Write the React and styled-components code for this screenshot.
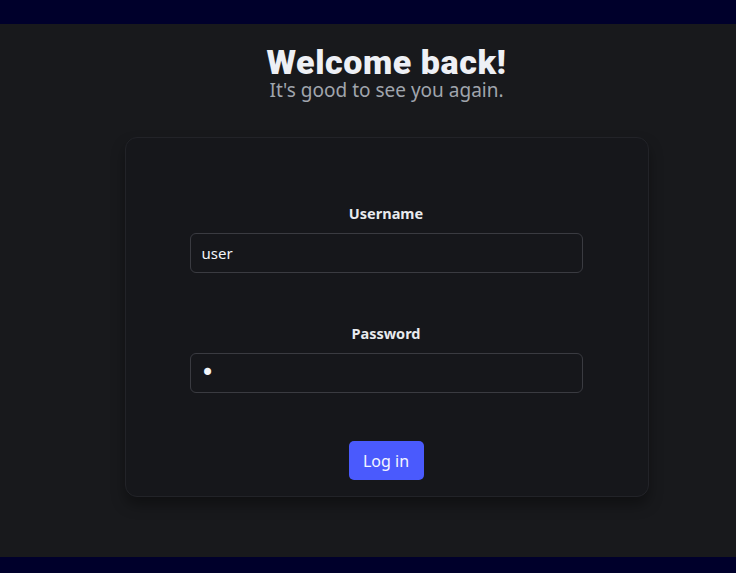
import React from "react"
import styled, { createGlobalStyle } from "styled-components"

const Global = createGlobalStyle`
html, body {
  margin: 0;
  padding: 0;
  background: #18191c;
}
* { box-sizing: border-box; }
`

const Page = styled.div`
display: flex;
flex-direction: column;
height: 573px;
font-family: "Noto Sans", "Open Sans", sans-serif;
color: #e8eaee;`

const Bar = styled.div`
height: ${p => p.$h}px;
flex-shrink: 0;
background: #00002b;`

const Main = styled.main`
flex: 1;
display: flex;
flex-direction: column;
align-items: center;
padding: 19px 0 0 37px;
background: #18191c;`

const Title = styled.h1`
margin: 0;
font-family: Roboto, Inter, "Noto Sans", sans-serif;
font-weight: 900;
font-size: 34px;
line-height: 38px;
letter-spacing: 0.55px;
color: #eef0f5;`

const Subtitle = styled.p`
margin: 0;
font-size: 19px;
line-height: 18px;
color: #a0a5ad;`

const Card = styled.form`
margin-top: 38px;
width: 524px;
height: 360px;
display: flex;
flex-direction: column;
align-items: center;
padding: 63px 65px 16px 64px;
background: #16171b;
border: 1px solid #222328;
border-radius: 12px;
box-shadow: 0 8px 14px rgba(0, 0, 0, 0.35);`

const Field = styled.div`
width: 100%;
display: flex;
flex-direction: column;
align-items: center;
gap: 8px;
margin-bottom: ${p => p.$mb}px;`

const Label = styled.label`
font-weight: 700;
font-size: 14.5px;
line-height: 24px;
color: #e8eaee;`

const Input = styled.input`
width: 100%;
height: 40px;
padding: 0 11px;
background: #16171b;
border: 1px solid #3a3b41;
border-radius: 6px;
color: #f2f4f8;
font-family: "Noto Sans", sans-serif;
font-size: 15px;
outline: none;

&[type="password"] {
  font-family: "DejaVu Sans", sans-serif;
  font-size: 24px;
  padding-left: 10px;
}`

const Button = styled.button`
height: 40px;
width: 75px;
padding: 0;
border: none;
border-radius: 5px;
background: #4a5afd;
color: #f4f6ff;
font-family: "Noto Sans", sans-serif;
font-size: 16px;`

export default function App() {
  return (
    <>
      <Global />
      <Page>
        <Bar $h={24} />
        <Main>
          <Title>Welcome back!</Title>
          <Subtitle>It's good to see you again.</Subtitle>
          <Card onSubmit={e => e.preventDefault()}>
            <Field $mb={48}>
              <Label htmlFor="username">Username</Label>
              <Input id="username" defaultValue="user" />
            </Field>
            <Field $mb={48}>
              <Label htmlFor="password">Password</Label>
              <Input id="password" type="password" defaultValue="a" />
            </Field>
            <Button type="submit">Log in</Button>
          </Card>
        </Main>
        <Bar $h={16} />
      </Page>
    </>
  )
}
